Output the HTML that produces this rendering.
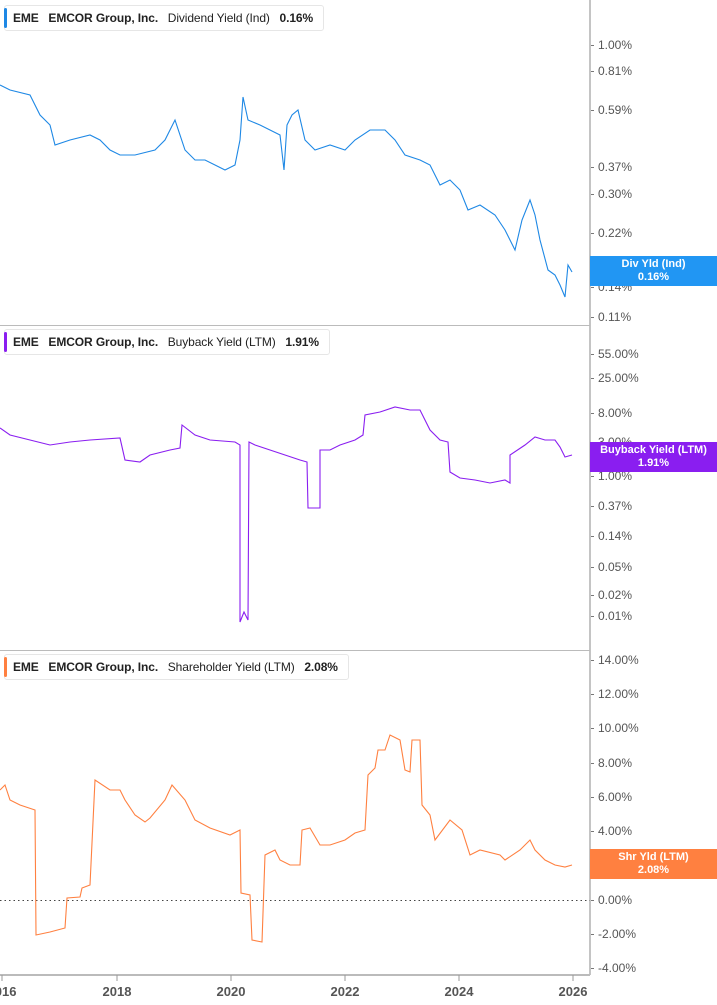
<!DOCTYPE html><html><head><style>
body{margin:0;width:717px;height:1005px;background:#fff;font-family:"Liberation Sans",sans-serif;position:relative;overflow:hidden}
.lg{position:absolute;left:4px;height:24px;border:1px solid #e6e6e6;border-radius:3px;background:#fff;font-size:12px;color:#222;line-height:24px;padding:0 10px 0 8px;white-space:nowrap;letter-spacing:-0.1px}
.lg:before{content:"";position:absolute;left:-1px;top:2px;bottom:2px;width:3px;border-radius:2px;background:var(--c)}
.lg b{font-weight:bold}
.y{position:absolute;left:598px;font-size:12px;color:#555;transform:translateY(-50%)}
.y:before{content:"";position:absolute;left:-7px;top:7px;width:3px;height:1px;background:#777}
.bd{position:absolute;left:590px;width:127px;height:30px;color:#fff;font-size:11px;font-weight:bold;text-align:center;line-height:13px;padding-top:2px;box-sizing:border-box}
.x{position:absolute;top:984px;font-size:13px;font-weight:bold;color:#555;transform:translateX(-50%)}
</style></head><body>
<svg width="717" height="1005" style="position:absolute;left:0;top:0">
<line x1="590" y1="0" x2="590" y2="975" stroke="#888" stroke-width="1"/>
<line x1="0" y1="325.5" x2="590" y2="325.5" stroke="#bbb"/>
<line x1="0" y1="650.5" x2="590" y2="650.5" stroke="#bbb"/>
<line x1="0" y1="975" x2="590" y2="975" stroke="#bbb" stroke-width="2"/>
<line x1="0" y1="900.5" x2="590" y2="900.5" stroke="#444" stroke-dasharray="1.5,3"/>
<g stroke="#999"><line x1="2" y1="975" x2="2" y2="981"/><line x1="117" y1="975" x2="117" y2="981"/><line x1="231" y1="975" x2="231" y2="981"/><line x1="345" y1="975" x2="345" y2="981"/><line x1="459" y1="975" x2="459" y2="981"/><line x1="573" y1="975" x2="573" y2="981"/></g>
<polyline fill="none" stroke="#1e88e5" stroke-width="1.1" points="0,85 10,90 30,95 40,115 50,125 55,145 70,140 90,135 100,140 110,150 120,155 135,155 155,150 165,140 175,120 185,150 195,160 205,160 215,165 225,170 235,165 240,140 243,97 248,120 260,125 270,130 280,135 284,170 287,125 292,115 298,110 305,140 315,150 330,145 345,150 355,140 370,130 385,130 395,140 405,155 420,160 430,165 440,185 450,180 460,190 468,210 480,205 495,215 505,230 515,250 522,220 530,200 535,215 540,240 548,270 555,275 560,285 565,297 568,265 572,272"/>
<polyline fill="none" stroke="#8a1ef0" stroke-width="1.1" points="0,428 10,435 30,440 50,445 70,442 90,440 120,438 125,460 140,462 150,455 170,450 180,448 182,425 195,435 210,440 235,442 240,445 240,622 244,612 248,620 249,442 255,445 270,450 285,455 300,460 307,462 308,508 320,508 320,450 330,450 340,445 355,440 363,435 365,415 380,412 395,407 410,410 420,410 430,430 440,440 448,442 450,472 460,478 475,480 490,483 505,480 510,483 510,455 525,445 535,437 545,440 555,440 560,447 565,457 572,455"/>
<polyline fill="none" stroke="#ff8040" stroke-width="1.1" points="0,790 5,785 10,800 20,805 35,810 36,935 50,932 65,928 67,898 80,897 82,888 90,885 95,780 110,790 120,790 125,800 135,815 145,822 150,818 165,800 172,785 185,800 195,820 210,828 230,835 240,830 241,893 250,895 252,940 262,942 265,855 275,850 280,860 290,865 300,865 302,830 310,828 320,845 330,845 345,840 355,833 365,830 368,775 375,768 378,750 385,750 390,735 400,740 405,770 410,772 412,740 420,740 422,805 430,815 435,840 450,820 462,830 470,855 480,850 500,855 505,860 520,850 530,840 535,850 545,860 555,865 565,867 572,865"/>
</svg>
<div class="lg" style="top:5px;--c:#1e88e5"><b>EME</b>&nbsp;&nbsp;&nbsp;<b>EMCOR Group, Inc.</b>&nbsp;&nbsp;&nbsp;Dividend Yield (Ind)&nbsp;&nbsp;&nbsp;<b>0.16%</b></div>
<div class="lg" style="top:329px;--c:#8a1ef0"><b>EME</b>&nbsp;&nbsp;&nbsp;<b>EMCOR Group, Inc.</b>&nbsp;&nbsp;&nbsp;Buyback Yield (LTM)&nbsp;&nbsp;&nbsp;<b>1.91%</b></div>
<div class="lg" style="top:654px;--c:#ff8040"><b>EME</b>&nbsp;&nbsp;&nbsp;<b>EMCOR Group, Inc.</b>&nbsp;&nbsp;&nbsp;Shareholder Yield (LTM)&nbsp;&nbsp;&nbsp;<b>2.08%</b></div>
<div class="y" style="top:45px">1.00%</div><div class="y" style="top:71px">0.81%</div><div class="y" style="top:110px">0.59%</div><div class="y" style="top:167px">0.37%</div><div class="y" style="top:194px">0.30%</div><div class="y" style="top:233px">0.22%</div><div class="y" style="top:287px">0.14%</div><div class="y" style="top:317px">0.11%</div>
<div class="y" style="top:354px">55.00%</div><div class="y" style="top:378px">25.00%</div><div class="y" style="top:413px">8.00%</div><div class="y" style="top:442px">3.00%</div><div class="y" style="top:476px">1.00%</div><div class="y" style="top:506px">0.37%</div><div class="y" style="top:536px">0.14%</div><div class="y" style="top:567px">0.05%</div><div class="y" style="top:595px">0.02%</div><div class="y" style="top:616px">0.01%</div>
<div class="y" style="top:660px">14.00%</div><div class="y" style="top:694px">12.00%</div><div class="y" style="top:728px">10.00%</div><div class="y" style="top:763px">8.00%</div><div class="y" style="top:797px">6.00%</div><div class="y" style="top:831px">4.00%</div><div class="y" style="top:866px">2.00%</div><div class="y" style="top:900px">0.00%</div><div class="y" style="top:934px">-2.00%</div><div class="y" style="top:968px">-4.00%</div>
<div class="bd" style="top:256px;background:#2196f3">Div Yld (Ind)<br>0.16%</div>
<div class="bd" style="top:442px;background:#8a1ef0">Buyback Yield (LTM)<br>1.91%</div>
<div class="bd" style="top:849px;background:#ff8040">Shr Yld (LTM)<br>2.08%</div>
<div class="x" style="left:2px">2016</div><div class="x" style="left:117px">2018</div><div class="x" style="left:231px">2020</div><div class="x" style="left:345px">2022</div><div class="x" style="left:459px">2024</div><div class="x" style="left:573px">2026</div>
</body></html>
